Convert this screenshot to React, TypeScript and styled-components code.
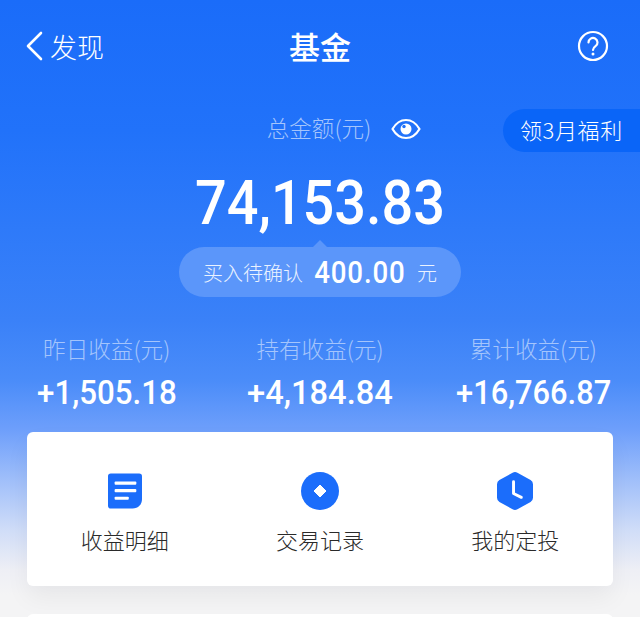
import React from 'react';
import styled, { createGlobalStyle } from 'styled-components';

const GlobalStyle = createGlobalStyle`
  html, body {
    margin: 0;
    padding: 0;
    background: #f4f4f6;
  }
  * {
    box-sizing: border-box;
  }
`;

const CJK = `"Noto Sans CJK SC", "Noto Sans", sans-serif`;
const NUM = `Roboto, "Noto Sans CJK SC", sans-serif`;

const Page = styled.div`
  width: 640px;
  height: 617px;
  overflow: hidden;
  font-family: ${CJK};
  background: linear-gradient(
    180deg,
    #1a6cf9 0,
    #2172fa 130px,
    #3a81f8 320px,
    #4a8cf9 380px,
    #6e9ffb 430px,
    #a0bffa 480px,
    #d0ddf8 530px,
    #eeeff5 570px,
    #f4f4f5 595px
  );
`;

const Header = styled.header`
  height: 92px;
  padding: 0 31px;
  display: grid;
  grid-template-columns: 1fr auto 1fr;
  align-items: center;
  color: #fff;
`;

const BackLink = styled.div`
  margin-left: -7px;
  display: flex;
  align-items: center;
  gap: 6px;
  font-size: 27px;
  font-weight: 300;
`;

const Title = styled.h1`
  margin: -2px 0 0;
  font-size: 31px;
  font-weight: 500;
  line-height: 1;
`;

const HelpSlot = styled.div`
  display: flex;
  justify-content: flex-end;
`;

const TotalRow = styled.div`
  position: relative;
  height: 43px;
  margin-top: 17px;
  padding: 0 0 3px 48px;
  display: flex;
  align-items: center;
  justify-content: center;
  gap: 20px;
`;

const MutedLabel = styled.span`
  font-size: 22.6px;
  line-height: 33px;
  font-weight: 300;
  color: #a5c5fc;
  white-space: nowrap;
`;

const TotalLabel = styled(MutedLabel)`
  margin-top: -3px;
`;

const Promo = styled.div`
  position: absolute;
  right: 0;
  top: 0;
  width: 137px;
  height: 43px;
  padding: 0 0 3px 17px;
  display: flex;
  align-items: center;
  border-radius: 22px 0 0 22px;
  background: #0a65f8;
  color: #fff;
  font-size: 22px;
  font-weight: 300;
  letter-spacing: 0.6px;
`;

const Total = styled.div`
  margin-top: 18px;
  text-align: center;
  font-family: ${NUM};
  font-size: 62px;
  font-weight: 500;
  line-height: 66px;
  color: #fff;
  transform: scaleX(0.9);
`;

const PendingPill = styled.div`
  position: relative;
  width: 282px;
  height: 50px;
  margin: 11px auto 0;
  display: flex;
  align-items: center;
  justify-content: center;
  gap: 11px;
  border-radius: 25px;
  background: #5b96fa;
  color: #eaf2ff;
  font-size: 20px;
  font-weight: 300;

  &::before {
    content: '';
    position: absolute;
    left: 50%;
    top: -7px;
    margin-left: -7px;
    border-left: 7px solid transparent;
    border-right: 7px solid transparent;
    border-bottom: 7px solid #5b96fa;
  }
`;

const PendingAmount = styled.span`
  margin: 0 -7px;
  font-family: ${NUM};
  font-size: 32px;
  font-weight: 500;
  letter-spacing: 1px;
  color: #fff;
  transform: scaleX(0.865);
`;

const Stats = styled.div`
  margin-top: 35px;
  display: grid;
  grid-template-columns: repeat(3, 1fr);
`;

const Stat = styled.div`
  display: flex;
  flex-direction: column;
  align-items: center;
`;

const StatValue = styled.div<{ $squeeze: number }>`
  margin-top: 8px;
  font-family: ${NUM};
  font-size: 34px;
  font-weight: 500;
  line-height: 38px;
  color: #fff;
  white-space: nowrap;
  transform: scaleX(${(p) => p.$squeeze});
`;

const Card = styled.section`
  margin: 21px 27px 0;
  height: 154px;
  padding-top: 39px;
  display: grid;
  grid-template-columns: repeat(3, 1fr);
  background: #fff;
  border-radius: 6px;
  box-shadow: 0 12px 24px rgba(0, 0, 0, 0.05);
`;

const Action = styled.div`
  display: flex;
  flex-direction: column;
  align-items: center;
  gap: 11px;
  color: #2a2a2a;
  font-size: 22px;
  font-weight: 300;
  line-height: 34px;
`;

const IconSlot = styled.div`
  height: 40px;
  display: flex;
  align-items: center;
  justify-content: center;
`;

const NextCard = styled.div`
  margin: 28px 27px 0;
  height: 40px;
  background: #fff;
  border-radius: 6px;
`;

const BackIcon = () => (
  <svg width="20" height="30" viewBox="0 0 20 30" fill="none">
    <path d="M17 2 4 15l13 13" stroke="#fff" strokeWidth="2.6" strokeLinecap="round" strokeLinejoin="round" />
  </svg>
);

const HelpIcon = () => (
  <svg width="32" height="32" viewBox="0 0 32 32" fill="none">
    <circle cx="16" cy="16" r="14" stroke="#fff" strokeWidth="2.2" />
    <path d="M11.5 12.5a4.5 4.5 0 1 1 7 3.7c-1.6 1.1-2.5 2-2.5 3.8" stroke="#fff" strokeWidth="2.2" strokeLinecap="round" />
    <circle cx="16" cy="24" r="1.5" fill="#fff" />
  </svg>
);

const EyeIcon = () => (
  <svg width="30" height="22" viewBox="0 0 30 22" fill="none">
    <path d="M1.5 11C5 5 9.5 2 15 2s10 3 13.500 9C25 17 20.500 20 15 20S5 17 1.500 11Z" stroke="#fff" strokeWidth="2.2" strokeLinejoin="round" />
    <circle cx="15" cy="11" r="5.500" fill="#fff" />
    <circle cx="13" cy="8.500" r="1.700" fill="#2172fa" />
  </svg>
);

const DocIcon = () => (
  <svg width="34" height="36" viewBox="0 0 36 37">
    <path d="M3 0h30a3 3 0 0 1 3 3v24c0 6-4 10-10 10H3a3 3 0 0 1-3-3V3a3 3 0 0 1 3-3Z" fill="#1b6dfb" />
    <rect x="7" y="8.500" width="23" height="3.300" rx="1" fill="#fff" />
    <rect x="7" y="16.500" width="23" height="3.300" rx="1" fill="#fff" />
    <rect x="7" y="24.500" width="15" height="3.300" rx="1" fill="#fff" />
  </svg>
);

const CoinIcon = () => (
  <svg width="38" height="38" viewBox="0 0 38 38">
    <circle cx="19" cy="19" r="19" fill="#1b6dfb" />
    <path d="M19 13 25 19 19 25 13 19Z" fill="#fff" stroke="#fff" strokeLinejoin="round" />
  </svg>
);

const ClockIcon = () => (
  <svg width="36" height="40" viewBox="0 0 37 40">
    <path d="M16 1.200a5 5 0 0 1 5 0l13.500 7.600a5 5 0 0 1 2.500 4.300v13.800a5 5 0 0 1-2.500 4.300L21 38.800a5 5 0 0 1-5 0L2.500 31.200A5 5 0 0 1 0 26.900V13.100a5 5 0 0 1 2.500-4.300Z" fill="#1b6dfb" />
    <path d="M17 10.500v12l8 4" fill="none" stroke="#fff" strokeWidth="3" strokeLinecap="round" strokeLinejoin="round" />
  </svg>
);

const stats = [
  { label: '昨日收益(元)', value: '+1,505.18', squeeze: 0.92 },
  { label: '持有收益(元)', value: '+4,184.84', squeeze: 0.96 },
  { label: '累计收益(元)', value: '+16,766.87', squeeze: 0.906 },
];

const actions = [
  { label: '收益明细', icon: <DocIcon /> },
  { label: '交易记录', icon: <CoinIcon /> },
  { label: '我的定投', icon: <ClockIcon /> },
];

export default function App() {
  return (
    <Page>
      <GlobalStyle />
      <Header>
        <BackLink>
          <BackIcon />
          发现
        </BackLink>
        <Title>基金</Title>
        <HelpSlot>
          <HelpIcon />
        </HelpSlot>
      </Header>

      <TotalRow>
        <TotalLabel>总金额(元)</TotalLabel>
        <EyeIcon />
        <Promo>领3月福利</Promo>
      </TotalRow>

      <Total>74,153.83</Total>

      <PendingPill>
        买入待确认
        <PendingAmount>400.00</PendingAmount>
        元
      </PendingPill>

      <Stats>
        {stats.map((s) => (
          <Stat key={s.label}>
            <MutedLabel>{s.label}</MutedLabel>
            <StatValue $squeeze={s.squeeze}>{s.value}</StatValue>
          </Stat>
        ))}
      </Stats>

      <Card>
        {actions.map((a) => (
          <Action key={a.label}>
            <IconSlot>{a.icon}</IconSlot>
            {a.label}
          </Action>
        ))}
      </Card>

      <NextCard />
    </Page>
  );
}
